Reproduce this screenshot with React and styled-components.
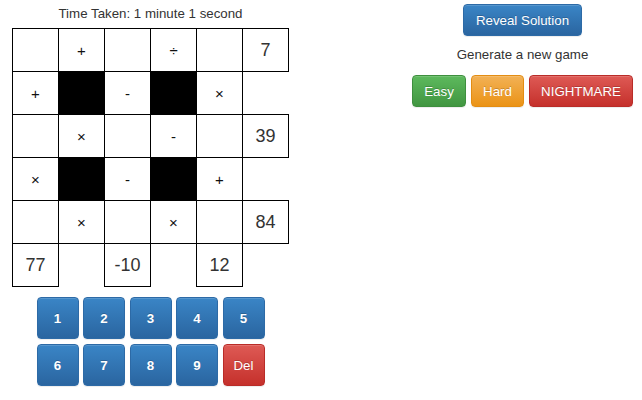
import React from "react";
import styled, { createGlobalStyle } from "styled-components";

const Global = createGlobalStyle`
  html, body { margin: 0; padding: 0; background: #fff; }
  body { font-family: "Liberation Sans", Arial, sans-serif; color: #333; font-size: 13.3px; }
`;

const Page = styled.div`
  display: flex;
  align-items: flex-start;
  width: 642px;
  height: 400px;
`;

const LeftCol = styled.div`
  display: flex;
  flex-direction: column;
  align-items: center;
  margin-left: 12px;
  width: 277px;
`;

const Timer = styled.div`
  height: 28px;
  line-height: 27px;
  font-size: 13.3px;
  color: #333;
  text-align: center;
`;

const Board = styled.div`
  display: grid;
  grid-template-columns: repeat(6, 46px);
  grid-template-rows: repeat(6, 43px);
  width: 277px;
  height: 259px;
`;

const Cell = styled.div`
  box-sizing: border-box;
  width: 47px;
  height: 44px;
  border: ${(p) => (p.$open ? "none" : "1px solid #000")};
  background: ${(p) => (p.$black ? "#000" : "transparent")};
  display: flex;
  align-items: center;
  justify-content: center;
  font-size: ${(p) => (p.$num ? "18px" : "15px")};
  color: ${(p) => (p.$num ? "#333" : "#111")};
`;

const Pad = styled.div`
  display: grid;
  grid-template-columns: repeat(5, 42px);
  grid-auto-rows: 42px;
  gap: 5px 4.5px;
  margin-top: 10px;
`;

const colors = {
  blue: ["#3a85c6", "#2a65a0", "#2d6aa6"],
  red: ["#de5a55", "#c5302b", "#b92c28"],
  green: ["#5db95d", "#419641", "#3e8f3e"],
  orange: ["#f2b155", "#eb9316", "#e38d13"],
};

const Btn = styled.button`
  box-sizing: border-box;
  font-family: "Liberation Sans", Arial, sans-serif;
  font-size: 13.3px;
  color: #fff;
  border: 1px solid ${(p) => colors[p.$c][2]};
  border-radius: 4px;
  background: linear-gradient(to bottom, ${(p) => colors[p.$c][0]} 0%, ${(p) => colors[p.$c][1]} 100%);
  text-shadow: 0 -1px 0 rgba(0, 0, 0, 0.2);
  box-shadow: inset 0 1px 0 rgba(255, 255, 255, 0.15), 0 1px 1px rgba(0, 0, 0, 0.075);
  padding: 0;
  white-space: nowrap;
  width: ${(p) => p.$w}px;
  height: 32px;
  cursor: pointer;
`;

const PadBtn = styled(Btn)`
  height: 42px;
  width: 42px;
  font-weight: ${(p) => (p.$c === "blue" ? "bold" : "normal")};
`;

const RightCol = styled.div`
  margin-left: 123px;
  width: 221px;
  display: flex;
  flex-direction: column;
  align-items: center;
  padding-top: 4px;
`;

const Note = styled.div`
  margin-top: 8px;
  line-height: 22px;
  font-size: 13.3px;
  color: #333;
`;

const Levels = styled.div`
  display: flex;
  gap: 5px;
  margin-top: 9px;
`;

const board = [
  ["", "+", "", "÷", "", "7"],
  ["+", "#", "-", "#", "×", null],
  ["", "×", "", "-", "", "39"],
  ["×", "#", "-", "#", "+", null],
  ["", "×", "", "×", "", "84"],
  ["77", null, "-10", null, "12", null],
];

export default function App() {
  return (
    <>
      <Global />
      <Page>
        <LeftCol>
          <Timer>Time Taken: 1 minute 1 second</Timer>
          <Board>
            {board.flat().map((v, i) => (
              <Cell
                key={i}
                $open={v === null}
                $black={v === "#"}
                $num={v !== null && /\d/.test(v)}
              >
                {v && v !== "#" ? v : ""}
              </Cell>
            ))}
          </Board>
          <Pad>
            {["1", "2", "3", "4", "5", "6", "7", "8", "9"].map((n) => (
              <PadBtn key={n} $c="blue">{n}</PadBtn>
            ))}
            <PadBtn $c="red">Del</PadBtn>
          </Pad>
        </LeftCol>
        <RightCol>
          <Btn $c="blue" $w={119}>Reveal Solution</Btn>
          <Note>Generate a new game</Note>
          <Levels>
            <Btn $c="green" $w={54}>Easy</Btn>
            <Btn $c="orange" $w={53}>Hard</Btn>
            <Btn $c="red" $w={104}>NIGHTMARE</Btn>
          </Levels>
        </RightCol>
      </Page>
    </>
  );
}
